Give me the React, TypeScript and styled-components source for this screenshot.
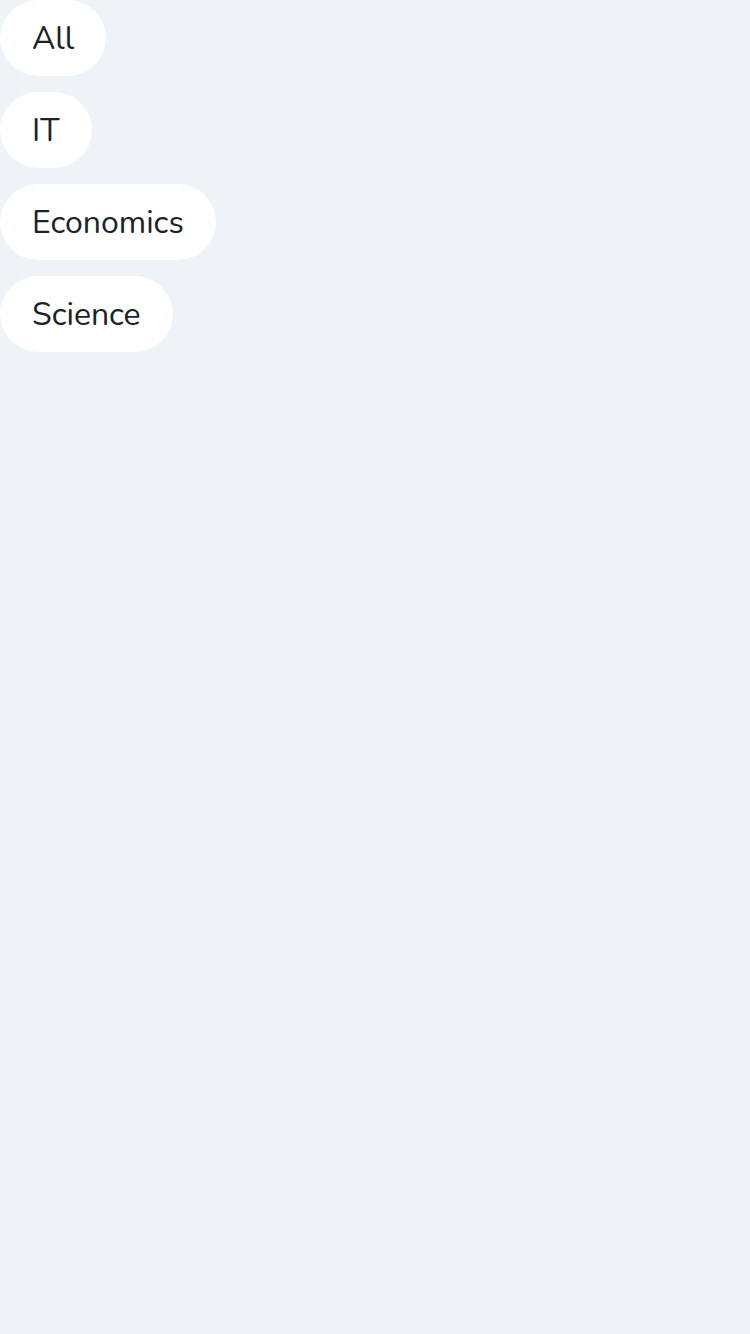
import React from "react";
import styled, { createGlobalStyle } from "styled-components";

const Global = createGlobalStyle`
  html, body { margin: 0; padding: 0; background: #edf3f7; }
  body { font-family: Nunito, "Open Sans", sans-serif; }
`;

const Page = styled.div`
  min-height: 1334px;
  background: #edf3f7;
  display: flex;
  flex-direction: column;
  align-items: flex-start;
  gap: 16px;
`;

const Chip = styled.button`
  height: 76px;
  padding: 0 32px;
  border: none;
  border-radius: 38px;
  background: #ffffff;
  color: #1b2227;
  font-family: Nunito, "Open Sans", sans-serif;
  font-size: 32px;
  font-weight: 400;
  display: flex;
  align-items: center;
  cursor: pointer;
`;

const categories = ["All", "IT", "Economics", "Science"];

export default function App() {
  return (
    <>
      <Global />
      <Page>
        {categories.map((c) => (
          <Chip key={c}>{c}</Chip>
        ))}
      </Page>
    </>
  );
}
